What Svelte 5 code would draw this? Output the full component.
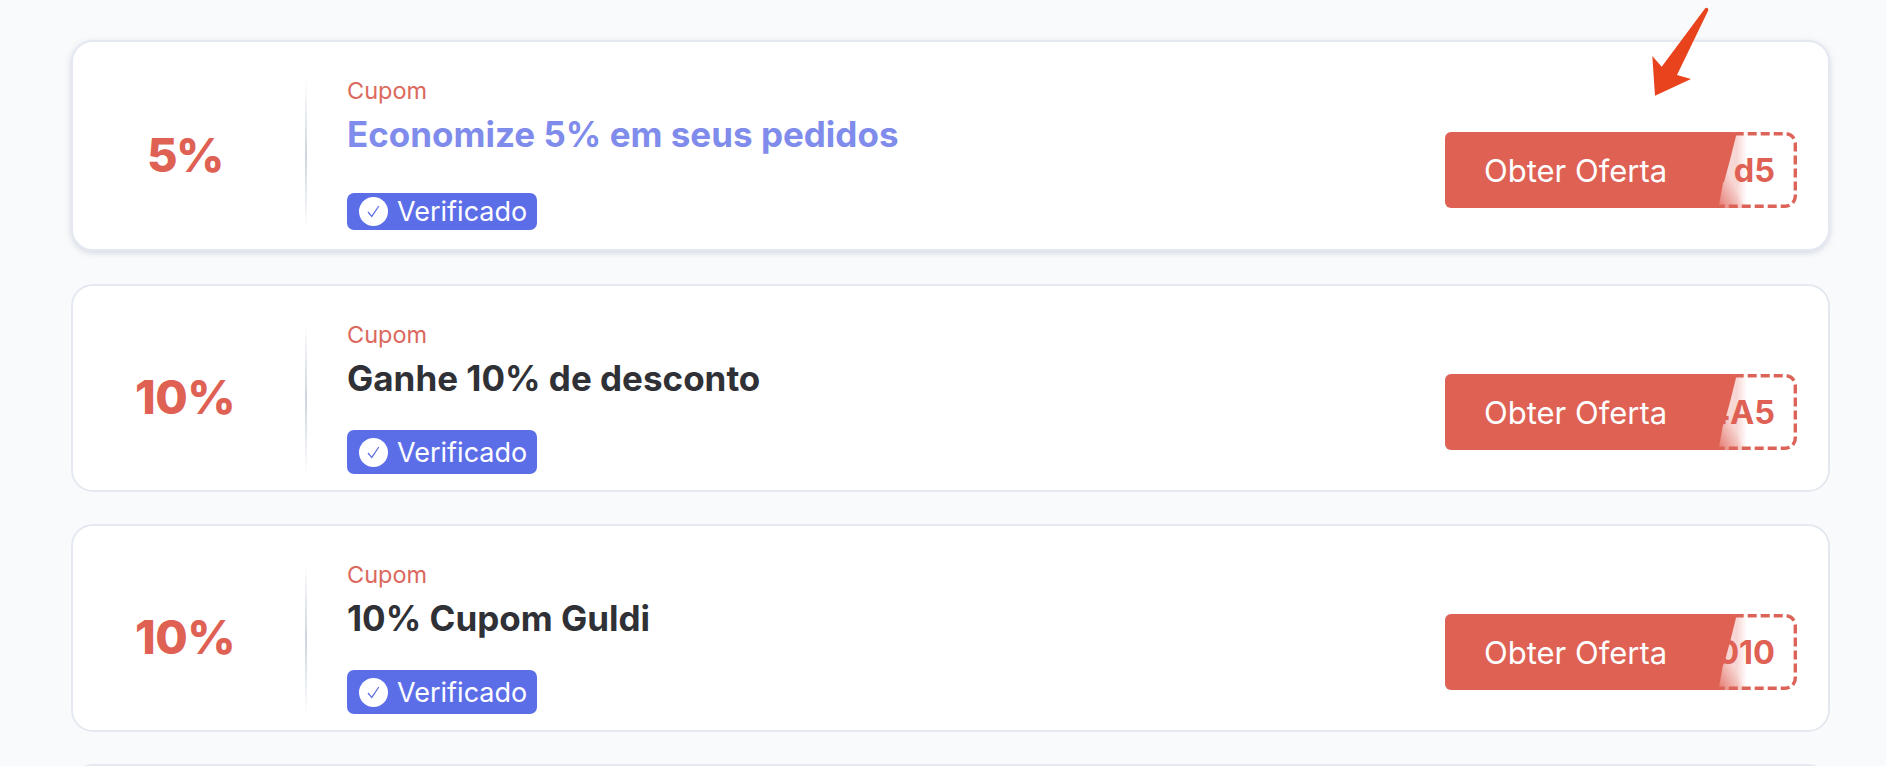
<script>
  const offers = [
    { pct: '5%', title: 'Economize 5% em seus pedidos', code: 'd5', hover: true },
    { pct: '10%', title: 'Ganhe 10% de desconto', code: '4A5', hover: false },
    { pct: '10%', title: '10% Cupom Guldi', code: '010', hover: false }
  ];
</script>

<main class="page">
  {#each offers as o}
    <article class="card" class:active={o.hover}>
      <div class="pct">{o.pct}</div>
      <div class="divider"></div>
      <div class="body">
        <div class="kind">Cupom</div>
        <h3 class="title">{o.title}</h3>
        <div class="badge">
          <svg class="tick" viewBox="0 0 29 29" aria-hidden="true">
            <circle cx="14.5" cy="14.5" r="14.5" fill="#fff" />
            <path d="M9 15l3.8 4.4 7-10.4" fill="none" stroke="#5b6ee8" stroke-width="1.2" />
          </svg>
          <span>Verificado</span>
        </div>
      </div>
      <div class="deal">
        <span class="fold"></span>
        <div class="code">{o.code}</div>
        <svg class="dash" viewBox="0 0 152 76" aria-hidden="true">
          <rect x="1.7" y="1.7" width="148.6" height="72.6" rx="10" fill="none" stroke="#dc6358" stroke-width="3.4" stroke-dasharray="9 4" />
        </svg>
        <button class="cta">Obter Oferta</button>
      </div>
    </article>
  {/each}
  <article class="card"></article>
  <svg class="arrow" viewBox="0 0 60 100" aria-hidden="true">
    <path d="M55 2.6c1.6-1.6 3.8-.4 3.2 2L27 69l14 4L5 89.7 2.3 50l9.4 10.7z" fill="#e8431c" />
  </svg>
</main>

<style>
  :global(body) {
    margin: 0;
    background: #f9fafb;
    overflow: hidden;
    height: 766px;
  }
  .page {
    position: relative;
    height: 766px;
    overflow: hidden;
    box-sizing: border-box;
    padding: 40px 56px 0 71px;
    display: flex;
    flex-direction: column;
    gap: 32px;
    font-family: Inter, "Noto Sans", sans-serif;
  }
  .card {
    flex: none;
    box-sizing: border-box;
    height: 208px;
    display: flex;
    background: #fff;
    border: 2px solid #e4e9f1;
    border-radius: 22px;
    padding: 38px 31px 16px 0;
  }
  .card.active {
    height: 211px;
    box-shadow: 0 2px 6px rgba(140, 155, 180, 0.35);
    padding-bottom: 19px;
    margin-bottom: 1px;
  }
  .pct {
    width: 224px;
    margin-right: 8px;
    flex: none;
    align-self: center;
    text-align: center;
    margin-top: -5px;
    font-size: 47px;
    font-weight: 800;
    letter-spacing: -0.5px;
    color: #de6154;
  }
  .active .pct {
    margin-top: -1px;
    letter-spacing: -1.5px;
  }
  .divider {
    width: 2px;
    flex: none;
    background: linear-gradient(to bottom, rgba(203, 213, 224, 0), #cbd5e0 50%, rgba(203, 213, 224, 0));
  }
  .body {
    flex: 1;
    display: flex;
    flex-direction: column;
    align-items: flex-start;
    padding-left: 40px;
  }
  .kind {
    margin-top: -2px;
    font-size: 23.5px;
    line-height: 26px;
    color: #db695d;
  }
  .title {
    margin: 8px 0 0;
    font-size: 35px;
    line-height: 44px;
    font-weight: 700;
    color: #2f3136;
  }
  .active .title {
    color: #7f8ceb;
  }
  .badge {
    margin-top: auto;
    width: 190px;
    height: 44px;
    box-sizing: border-box;
    padding-left: 12px;
    display: flex;
    align-items: center;
    gap: 9px;
    background: #5b6ee8;
    border-radius: 7px;
    font-size: 27px;
    color: #fff;
  }
  .active .badge {
    height: 37px;
  }
  .tick {
    width: 29px;
    height: 29px;
    flex: none;
  }
  .deal {
    position: relative;
    flex: none;
    width: 352px;
    height: 76px;
    align-self: flex-end;
    margin-bottom: 24px;
  }
  .active .deal {
    margin-bottom: 22px;
  }
  .code {
    position: absolute;
    top: 0;
    right: 0;
    width: 152px;
    height: 76px;
    box-sizing: border-box;
    padding-right: 22px;
    display: flex;
    align-items: center;
    justify-content: flex-end;
    font-size: 32.5px;
    font-weight: 700;
    color: #de6154;
  }
  .dash {
    position: absolute;
    top: 0;
    right: 0;
    width: 152px;
    height: 76px;
  }
  .fold {
    position: absolute;
    top: 0;
    left: 262px;
    width: 40px;
    height: 76px;
    background:
      linear-gradient(to top right, rgba(224, 97, 85, 0.85) 12%, rgba(224, 97, 85, 0) 50%),
      linear-gradient(to right, rgba(224, 97, 85, 0.25) 75%, rgba(224, 97, 85, 0));
  }
  .cta {
    position: absolute;
    top: 0;
    left: 0;
    width: 294px;
    height: 76px;
    box-sizing: border-box;
    padding: 0 0 0 39px;
    text-align: left;
    border: 0;
    border-radius: 6px;
    background: #de6154;
    color: #fff;
    font: 400 31px Inter, "Noto Sans", sans-serif;
    clip-path: polygon(0 0, 292px 0, 285px 28px, 279px 50px, 278px 51px, 273.5px 76px, 0 76px);
  }
  .arrow {
    position: absolute;
    left: 1650px;
    top: 6px;
    width: 60px;
    height: 100px;
  }
</style>
